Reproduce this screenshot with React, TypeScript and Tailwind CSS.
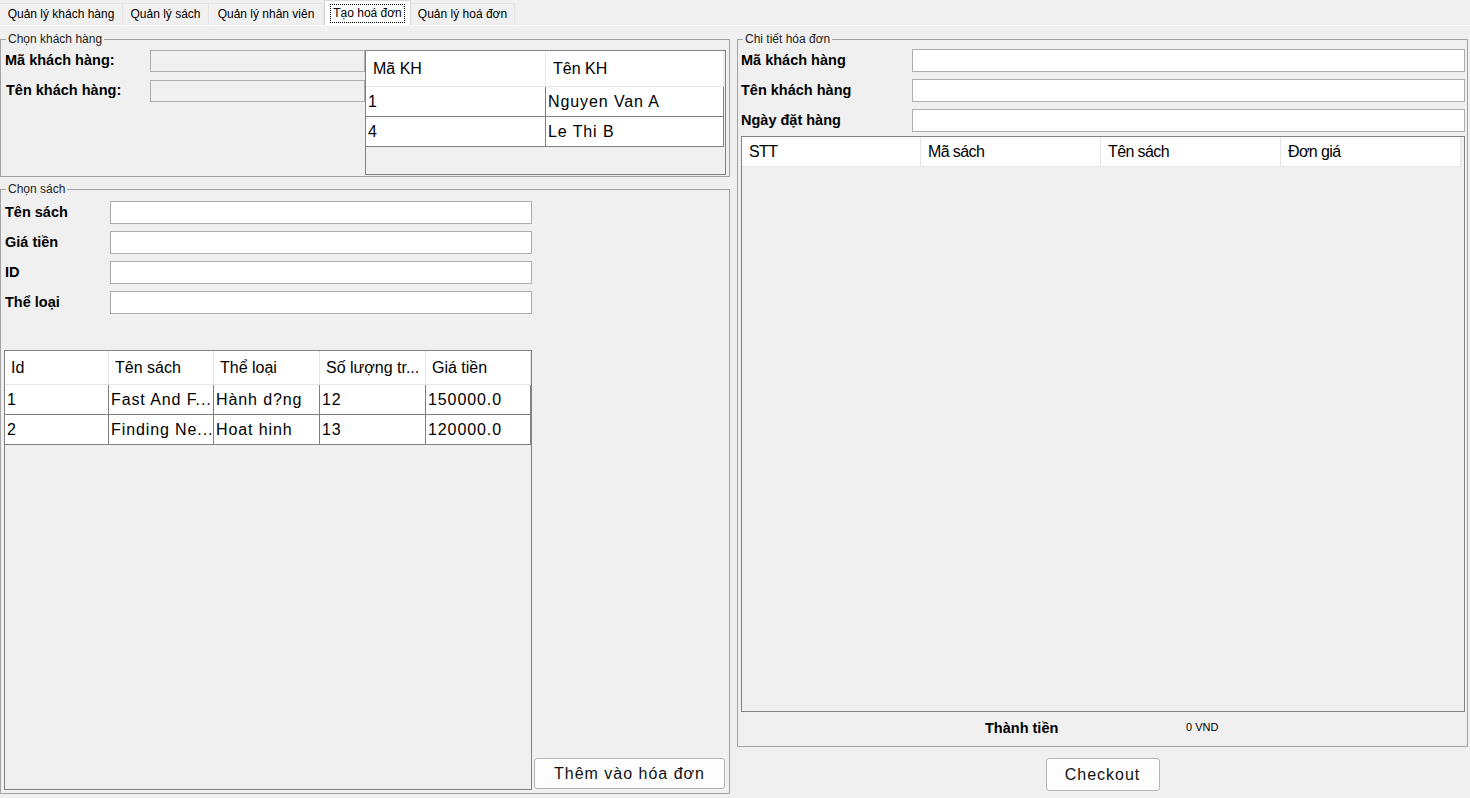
import React from "react";

type Col = { label: string; w: number };

const tabs = ["Quản lý khách hàng", "Quản lý sách", "Quản lý nhân viên", "Tạo hoá đơn", "Quản lý hoá đơn"];
const tabWidths = [123, 86, 115, 87, 104];

function TabBar() {
  return (
    <div className="h-[26px] flex items-end border-b border-[#fbfbfb] bg-[#f0f0f0]">
      {tabs.map((t, i) => {
        const active = i === 3;
        return (
          <div
            key={t}
            style={{ width: tabWidths[i] }}
            className={
              active
                ? "h-[25px] bg-white border-x border-t border-[#d9d9d9] flex items-center justify-center"
                : "h-[22px] bg-[#f0f0f0] border-r border-t border-[#e3e3e3] flex items-center justify-center"
            }
          >
            <span
              className={
                active
                  ? "text-[12px] leading-[17px] px-[2px] border border-dotted border-black"
                  : "text-[12px] leading-[17px]"
              }
            >
              {t}
            </span>
          </div>
        );
      })}
    </div>
  );
}

function Box({ title, className, children }: { title: string; className: string; children: React.ReactNode }) {
  return (
    <fieldset className={"border border-[#a3a3a3] shrink-0 " + className}>
      <legend className="ml-[5px] px-[2px] text-[12px] leading-[14px] text-[#222]">{title}</legend>
      {children}
    </fieldset>
  );
}

function Field({ disabled, w }: { disabled?: boolean; w: string }) {
  return (
    <div
      className={
        (disabled ? "bg-[#f0f0f0] h-[22px] " : "bg-white h-[23px] ") +
        "border border-[#adadad] shrink-0 " +
        w
      }
    />
  );
}

function Table({
  cols,
  rows,
  headH,
  headPad,
  headClass,
  className,
}: {
  cols: Col[];
  rows: string[][];
  headH: string;
  headPad: string;
  headClass?: string;
  className: string;
}) {
  return (
    <div className={"border border-[#828282] bg-[#f0f0f0] flex flex-col shrink-0 " + className}>
      <div className={"flex shrink-0 " + headH}>
        {cols.map((c) => (
          <div
            key={c.label}
            style={{ width: c.w }}
            className={
              "bg-white border-r border-b border-[#e5e5e5] flex items-center text-[16px] whitespace-nowrap overflow-hidden " +
              headPad +
              " " +
              (headClass ?? "")
            }
          >
            {c.label}
          </div>
        ))}
      </div>
      {rows.map((r, ri) => (
        <div key={ri} className="flex h-[30px] shrink-0">
          {r.map((v, ci) => (
            <div
              key={ci}
              style={{ width: cols[ci].w }}
              className="bg-white border-r border-b border-[#808080] flex items-center pl-[2px] text-[16px] tracking-[0.9px] whitespace-nowrap overflow-hidden"
            >
              {v}
            </div>
          ))}
        </div>
      ))}
    </div>
  );
}

function Button({ label, className }: { label: string; className: string }) {
  return (
    <button className={"bg-[#fdfdfd] border border-[#b4b4b4] rounded-[3px] text-[16px] tracking-[1px] text-[#111] flex items-center justify-center " + className}>
      {label}
    </button>
  );
}

export default function App() {
  return (
    <div className="w-[1470px] h-[798px] overflow-hidden bg-[#f0f0f0] text-black font-['Liberation_Sans',Arial,sans-serif] flex flex-col">
      <TabBar />
      <div className="flex gap-[7px] pt-[6px]">
        {/* left column */}
        <div className="w-[730px] flex flex-col gap-[5px]">
          <Box title="Chọn khách hàng" className="h-[145px]">
            <div className="flex pt-[4px] h-[130px]">
              <div className="w-[364px] flex flex-col gap-[8px] pl-[4px]">
                <div className="flex items-center">
                  <span className="w-[145px] text-[14.5px] font-bold">Mã khách hàng:</span>
                  <Field disabled w="w-[215px]" />
                </div>
                <div className="flex items-center">
                  <span className="w-[145px] text-[14.5px] font-bold pl-[1px]">Tên khách hàng:</span>
                  <Field disabled w="w-[215px]" />
                </div>
              </div>
              <Table
                className="w-[361px] h-[125px]"
                headH="h-[36px]"
                headPad="pl-[7px]"
                cols={[
                  { label: "Mã KH", w: 180 },
                  { label: "Tên KH", w: 178 },
                ]}
                rows={[
                  ["1", "Nguyen Van A"],
                  ["4", "Le Thi B"],
                ]}
              />
            </div>
          </Box>

          <Box title="Chọn sách" className="h-[612px]">
            <div className="flex h-[597px] pt-[5px]">
              <div className="w-[531px] pl-[3px] flex flex-col">
                <div className="flex flex-col gap-[7px]">
                  {["Tên sách", "Giá tiền", "ID", "Thể loại"].map((l) => (
                    <div key={l} className="flex items-center">
                      <span className="w-[106px] pl-[1px] text-[14.5px] font-bold">{l}</span>
                      <Field w="w-[422px]" />
                    </div>
                  ))}
                </div>
                <Table
                  className="mt-[36px] w-[528px] h-[440px]"
                  headH="h-[34px]"
                  headPad="pl-[6px]"
                  cols={[
                    { label: "Id", w: 104 },
                    { label: "Tên sách", w: 105 },
                    { label: "Thể loại", w: 106 },
                    { label: "Số lượng tr...", w: 106 },
                    { label: "Giá tiền", w: 105 },
                  ]}
                  rows={[
                    ["1", "Fast And F...", "Hành d?ng", "12", "150000.0"],
                    ["2", "Finding Ne...", "Hoat hinh", "13", "120000.0"],
                  ]}
                />
              </div>
              <div className="flex-1 flex items-end pl-[2px] pr-[3px] pb-[4px]">
                <Button label="Thêm vào hóa đơn" className="w-[191px] h-[31px]" />
              </div>
            </div>
          </Box>
        </div>

        {/* right column */}
        <div className="w-[731px] flex flex-col">
          <Box title="Chi tiết hóa đơn" className="h-[715px]">
            <div className="flex flex-col h-[700px] pt-[3px] pl-[3px] pr-[1px]">
              <div className="flex flex-col gap-[7px]">
                {["Mã khách hàng", "Tên khách hàng", "Ngày đặt hàng"].map((l) => (
                  <div key={l} className="flex items-center">
                    <span className="w-[171px] text-[14.5px] font-bold">{l}</span>
                    <Field w="w-[553px]" />
                  </div>
                ))}
              </div>
              <Table
                className="mt-[4px] w-[724px] h-[576px]"
                headH="h-[30px]"
                headPad="pl-[7px]"
                headClass="tracking-[-0.6px]"
                cols={[
                  { label: "STT", w: 179 },
                  { label: "Mã sách", w: 180 },
                  { label: "Tên sách", w: 180 },
                  { label: "Đơn giá", w: 180 },
                ]}
                rows={[]}
              />
              <div className="flex-1 flex items-center pl-[244px]">
                <span className="w-[201px] text-[14.5px] font-bold">Thành tiền</span>
                <span className="text-[11px] -mt-[4px]">0 VND</span>
              </div>
            </div>
          </Box>
          <div className="flex justify-center mt-[11px]">
            <Button label="Checkout" className="w-[114px] h-[33px]" />
          </div>
        </div>
      </div>
    </div>
  );
}
